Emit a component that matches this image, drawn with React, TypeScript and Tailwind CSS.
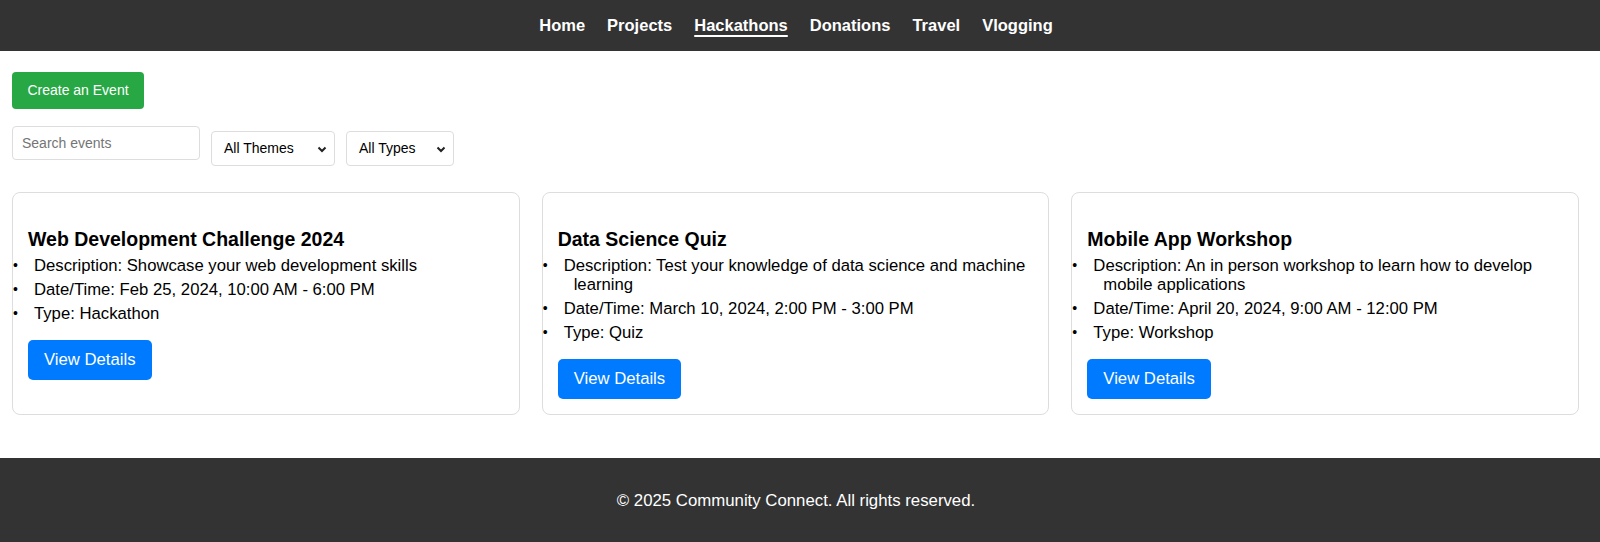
const navLinks = ['Home', 'Projects', 'Hackathons', 'Donations', 'Travel', 'Vlogging']

const events = [
  {
    id: 1,
    title: 'Web Development Challenge 2024',
    description: 'Showcase your web development skills',
    date: 'Feb 25, 2024, 10:00 AM - 6:00 PM',
    type: 'Hackathon',
  },
  {
    id: 2,
    title: 'Data Science Quiz',
    description: 'Test your knowledge of data science and machine learning',
    date: 'March 10, 2024, 2:00 PM - 3:00 PM',
    type: 'Quiz',
  },
  {
    id: 3,
    title: 'Mobile App Workshop',
    description: 'An in person workshop to learn how to develop mobile applications',
    date: 'April 20, 2024, 9:00 AM - 12:00 PM',
    type: 'Workshop',
  },
]

function Bullet({ text }: { text: string }) {
  return (
    <li className="relative mb-[5px] pl-[31px] -indent-[10px] leading-[19px] before:absolute before:left-0 before:top-0 before:indent-0 before:text-[14px] before:content-['•']">
      {text}
    </li>
  )
}

function Chevron() {
  return (
    <svg className="h-3 w-3" viewBox="0 0 12 12" fill="none" stroke="#222" strokeWidth="2">
      <path d="M2.5 4.5 6 8l3.5-3.5" />
    </svg>
  )
}

export default function App() {
  return (
    <div className="min-h-screen bg-white text-black font-['Liberation_Sans',Arial,sans-serif]">
      {/* Header */}
      <header className="h-[51px] bg-[#333333] flex items-center justify-center pr-[8px]">
        <nav className="flex gap-[22px]">
          {navLinks.map((link) => (
            <a
              key={link}
              href="#"
              className={`text-white font-bold text-[16.5px] ${link === 'Hackathons' ? 'underline underline-offset-[4px] decoration-2' : ''}`}
            >
              {link}
            </a>
          ))}
        </nav>
      </header>

      <main className="px-[12px] pt-[21px] pb-[43px]">
        <button className="h-[37px] w-[132px] rounded-[4px] bg-[#28a745] text-white text-[14px]">
          Create an Event
        </button>

        {/* Filters */}
        <div className="mt-[17px] flex items-start">
          <input
            placeholder="Search events"
            className="h-[34px] w-[188px] rounded-[4px] border border-[#dddddd] px-[9px] text-[14px] placeholder:text-[#757575] outline-none"
          />
          <div className="ml-[11px] mt-[5px] flex h-[35px] w-[124px] items-center justify-between rounded-[4px] border border-[#dddddd] bg-white pl-[12px] pr-[6px] text-[14px]">
            <span>All Themes</span>
            <Chevron />
          </div>
          <div className="ml-[11px] mt-[5px] flex h-[35px] w-[108px] items-center justify-between rounded-[4px] border border-[#dddddd] bg-white pl-[12px] pr-[6px] text-[14px]">
            <span>All Types</span>
            <Chevron />
          </div>
        </div>

        {/* Event cards */}
        <div className="mt-[26px] grid w-[1567px] grid-cols-3 gap-[22px]">
          {events.map((event) => (
            <div key={event.id} className="rounded-[8px] border border-[#dddddd] px-[15px] pb-[15px] pt-[35px]">
              <h3 className="mb-[6px] text-[19.5px] font-bold leading-[22px]">{event.title}</h3>
              <ul className="-ml-[15px] text-[16.7px]">
                <Bullet text={`Description: ${event.description}`} />
                <Bullet text={`Date/Time: ${event.date}`} />
                <Bullet text={`Type: ${event.type}`} />
              </ul>
              <button className="mt-[12px] h-[40px] rounded-[5px] bg-[#007bff] px-[16px] text-[16.7px] text-white">
                View Details
              </button>
            </div>
          ))}
        </div>
      </main>

      <footer className="bg-[#333333] pt-[34px] pb-[40px] pr-[8px] text-center text-white text-[16.8px] leading-[18px]">
        © 2025 Community Connect. All rights reserved.
      </footer>
    </div>
  )
}
